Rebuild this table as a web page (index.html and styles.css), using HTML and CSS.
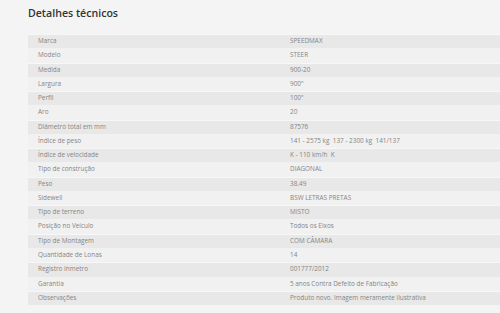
FILE: index.html
```html
<!DOCTYPE html>
<html lang="pt">
<head>
<meta charset="utf-8">
<link rel="stylesheet" href="styles.css">
</head>
<body>
<section class="specs">
  <h2 class="specs-title">Detalhes técnicos</h2>
  <table class="specs-table">
    <tbody>
      <tr><th>Marca</th><td>SPEEDMAX</td></tr>
      <tr><th>Modelo</th><td>STEER</td></tr>
      <tr><th>Medida</th><td>900-20</td></tr>
      <tr><th>Largura</th><td>900"</td></tr>
      <tr><th>Perfil</th><td>100"</td></tr>
      <tr><th>Aro</th><td>20</td></tr>
      <tr><th>Diâmetro total em mm</th><td>87576</td></tr>
      <tr><th>Índice de peso</th><td>141 - 2575 kg &nbsp;137 - 2300 kg &nbsp;141/137</td></tr>
      <tr><th>Índice de velocidade</th><td>K - 110 km/h &nbsp;K</td></tr>
      <tr><th>Tipo de construção</th><td>DIAGONAL</td></tr>
      <tr><th>Peso</th><td>38.49</td></tr>
      <tr><th>Sidewell</th><td>BSW LETRAS PRETAS</td></tr>
      <tr><th>Tipo de terreno</th><td>MISTO</td></tr>
      <tr><th>Posição no Veículo</th><td>Todos os Eixos</td></tr>
      <tr><th>Tipo de Montagem</th><td>COM CÂMARA</td></tr>
      <tr><th>Quantidade de Lonas</th><td>14</td></tr>
      <tr><th>Registro Inmetro</th><td>001777/2012</td></tr>
      <tr><th>Garantia</th><td>5 anos Contra Defeito de Fabricação</td></tr>
      <tr><th>Observações</th><td>Produto novo. Imagem meramente ilustrativa</td></tr>
    </tbody>
  </table>
</section>
</body>
</html>
```
FILE: styles.css
```css
html, body {
  margin: 0;
  padding: 0;
  background: #f4f4f4;
}
body {
  font-family: "Open Sans", "Liberation Sans", sans-serif;
  width: 500px;
  height: 313px;
  overflow: hidden;
}
.specs {
  padding: 6px 0 0 28px;
}
.specs-title {
  margin: 0;
  font-size: 10.6px;
  line-height: 14px;
  font-weight: 600;
  color: #333;
}
.specs-table {
  margin-top: 14px;
  width: 472px;
  border-collapse: collapse;
  border-spacing: 0;
  table-layout: fixed;
}
.specs-table tr {
  height: 14.26px;
}
.specs-table tr:nth-child(odd) {
  background: linear-gradient(#f7f7f7, #f7f7f7) top / 100% 1px no-repeat, #e8e8e8;
}
.specs-table tr:nth-child(even) {
  background: #f1f1f1;
}
.specs-table th,
.specs-table td {
  padding: 0 0 0 10px;
  height: 14.26px;
  font-size: 6.4px;
  line-height: 14.26px;
  font-weight: 400;
  color: #858585;
  text-align: left;
  white-space: nowrap;
  border: 0;
}
.specs-table th {
  width: 242px;
}
```
